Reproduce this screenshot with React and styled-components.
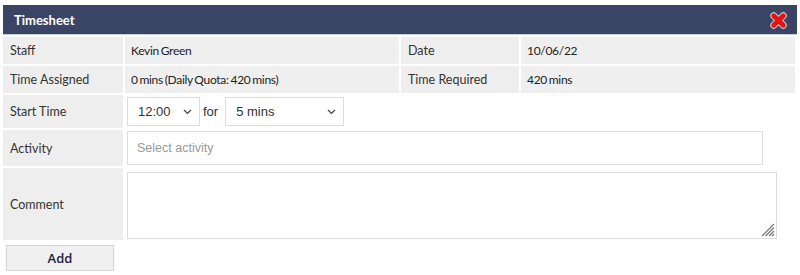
import React from "react";
import styled, { createGlobalStyle } from "styled-components";

const GlobalStyle = createGlobalStyle`
  body {
    margin: 0;
    background: #ffffff;
    font-family: "Lato", "Liberation Sans", sans-serif;
  }
`;

function CloseIcon() {
  return (
    <svg width="17" height="17" viewBox="0 0 16 16">
      <g strokeLinecap="round">
        <path d="M3.5 3.5 L12.5 12.5 M12.5 3.5 L3.5 12.5" stroke="#c9c9c9" strokeWidth="6.5" />
        <path d="M3.5 3.5 L12.5 12.5 M12.5 3.5 L3.5 12.5" stroke="#f00d0d" strokeWidth="4.6" />
      </g>
    </svg>
  );
}

function Chevron() {
  return (
    <svg width="9" height="6" viewBox="0 0 9 6">
      <path d="M1 1 L4.5 4.5 L8 1" fill="none" stroke="#444" strokeWidth="1.2" />
    </svg>
  );
}

function ResizeGrip() {
  return (
    <svg width="14" height="14" viewBox="0 0 14 14">
      <g stroke="#777" strokeWidth="1.2">
        <path d="M13 1 L1 13" />
        <path d="M13 4.5 L4.5 13" />
        <path d="M13 8 L8 13" />
        <path d="M13 11 L11 13" />
      </g>
    </svg>
  );
}

function Select({ value, width }) {
  return (
    <SelectBox $width={width}>
      <SelectInput defaultValue={value}>
        <option>{value}</option>
      </SelectInput>
      <ChevronSpot>
        <Chevron />
      </ChevronSpot>
    </SelectBox>
  );
}

export default function App() {
  return (
    <>
      <GlobalStyle />
      <Page>
        <Header>
          <Title>Timesheet</Title>
          <CloseButton>
            <CloseIcon />
          </CloseButton>
        </Header>
        <Form>
          <Label $h={27}>Staff</Label>
          <Value>Kevin Green</Value>
          <Label>Date</Label>
          <Value>10/06/22</Value>

          <Label $h={27}>Time Assigned</Label>
          <Value>0 mins (Daily Quota: 420 mins)</Value>
          <Label>Time Required</Label>
          <Value>420 mins</Value>

          <Label $h={33}>Start Time</Label>
          <Field>
            <Select value="12:00" width={73} />
            <ForText>for</ForText>
            <Select value="5 mins" width={119} />
          </Field>

          <Label $h={36}>Activity</Label>
          <Field>
            <TextInput placeholder="Select activity" />
          </Field>

          <Label $h={72}>Comment</Label>
          <Field>
            <AreaWrap>
              <Comment />
              <GripSpot>
                <ResizeGrip />
              </GripSpot>
            </AreaWrap>
          </Field>
        </Form>
        <AddButton>Add</AddButton>
      </Page>
    </>
  );
}

const Page = styled.div`
  padding: 5px 3px 0 3px;
`;

const Header = styled.div`
  height: 29px;
  background: #3a4464;
  border-bottom: 1px solid #c3cfdc;
  display: flex;
  align-items: center;
  justify-content: space-between;
  padding: 0 11px;
`;

const Title = styled.div`
  color: #ffffff;
  font-family: "Lato", sans-serif;
  font-weight: 700;
  font-size: 13px;
`;

const CloseButton = styled.div`
  display: flex;
  margin-right: -1px;
  margin-top: 1px;
`;

const Form = styled.div`
  display: grid;
  grid-template-columns: 120px 274px 118px 1fr;
  column-gap: 2px;
  row-gap: 2px;
  padding: 2px 2px 0 0;
`;

const Label = styled.div`
  background: #eeeeee;
  height: ${(p) => (p.$h ? `${p.$h}px` : "auto")};
  display: flex;
  align-items: center;
  padding: 0 7px;
  font-size: 12.5px;
  color: #333333;
`;

const Value = styled.div`
  background: #efefef;
  display: flex;
  align-items: center;
  padding: 0 6px;
  font-size: 12px;
  letter-spacing: -0.3px;
  word-spacing: -1px;
  color: #222222;
`;

const Field = styled.div`
  grid-column: 2 / -1;
  display: flex;
  align-items: center;
  padding-left: 2px;
  background: #ffffff;
`;

const SelectBox = styled.div`
  position: relative;
  width: ${(p) => p.$width}px;
  height: 29px;
`;

const SelectInput = styled.select`
  appearance: none;
  width: 100%;
  height: 100%;
  border: 1px solid #dddddd;
  background: #ffffff;
  padding: 0 0 0 10px;
  font-family: "Liberation Sans", Arial, sans-serif;
  font-size: 13px;
  color: #333333;
  outline: none;
`;

const ChevronSpot = styled.span`
  position: absolute;
  right: 8px;
  top: 12px;
  display: flex;
  pointer-events: none;
`;

const ForText = styled.span`
  font-family: "Liberation Sans", Arial, sans-serif;
  font-size: 13px;
  color: #333333;
  margin: 0 7px 0 3px;
`;

const TextInput = styled.input`
  width: 636px;
  height: 34px;
  box-sizing: border-box;
  border: 1px solid #dddddd;
  padding: 0 9px;
  font-family: "Liberation Sans", Arial, sans-serif;
  font-size: 12.5px;
  outline: none;
  &::placeholder {
    color: #999999;
  }
`;

const AreaWrap = styled.div`
  position: relative;
  display: flex;
  margin-top: 3px;
`;

const Comment = styled.textarea`
  width: 650px;
  height: 67px;
  box-sizing: border-box;
  border: 1px solid #dddddd;
  resize: none;
  outline: none;
  font-family: "Liberation Sans", Arial, sans-serif;
  font-size: 13px;
`;

const GripSpot = styled.span`
  position: absolute;
  right: 2px;
  bottom: 2px;
  display: flex;
  pointer-events: none;
`;

const AddButton = styled.button`
  display: block;
  margin: 5px 0 0 3px;
  width: 108px;
  height: 26px;
  background: #f0f0f0;
  border: 1px solid #d4d4d4;
  font-family: "Open Sans", sans-serif;
  font-weight: 600;
  font-size: 13px;
  color: #1c2340;
`;
